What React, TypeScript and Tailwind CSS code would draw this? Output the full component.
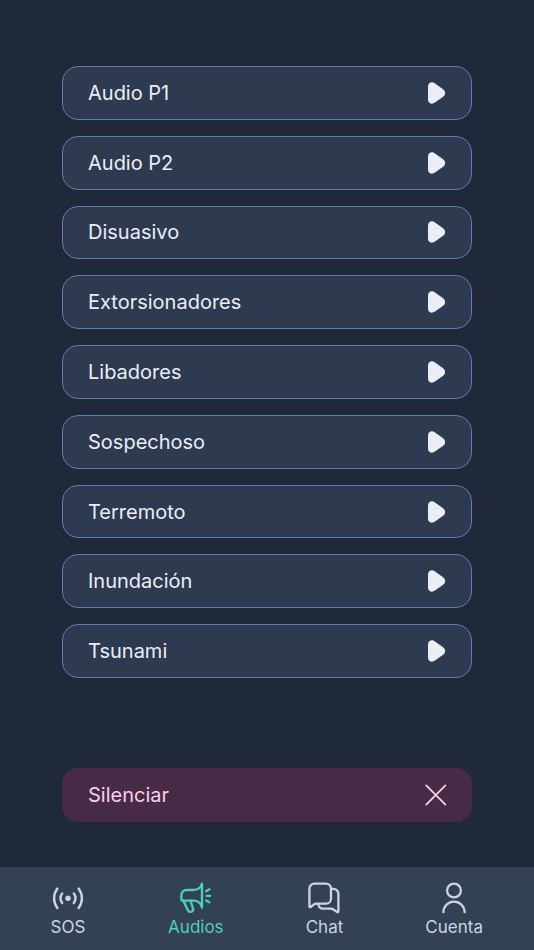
import React, { useState } from 'react';

const AUDIOS = [
  'Audio P1',
  'Audio P2',
  'Disuasivo',
  'Extorsionadores',
  'Libadores',
  'Sospechoso',
  'Terremoto',
  'Inundación',
  'Tsunami',
];

const PlayIcon: React.FC = () => (
  <svg className="h-6 w-6" viewBox="0 0 24 24" fill="currentColor" aria-hidden="true">
    <path d="M4 5.800C4 1.600 7.800 .200 11 2.400L18.800 8C21.800 10.200 21.800 13.800 18.800 16L11 21.600C7.800 23.800 4 22.400 4 18.200Z" />
  </svg>
);

const CloseIcon: React.FC = () => (
  <svg className="h-6 w-6" viewBox="0 0 24 24" fill="none" stroke="currentColor" strokeWidth={1.8} strokeLinecap="round" aria-hidden="true">
    <path d="M2.2 2.4l19.2 19.2M21.4 2.4l-19.2 19.2" />
  </svg>
);

const SosIcon: React.FC = () => (
  <svg className="h-9 w-9" viewBox="0 0 36 36" fill="none" stroke="currentColor" strokeWidth={2.4} strokeLinecap="round" aria-hidden="true">
    <circle cx="18" cy="18.2" r="2.7" fill="currentColor" stroke="none" />
    <path d="M12.2 13.4a8.2 8.2 0 0 0 0 9.6M23.8 13.4a8.2 8.2 0 0 1 0 9.6M7.4 8.4a16.2 16.2 0 0 0 0 19.6M28.6 8.4a16.2 16.2 0 0 1 0 19.6" />
  </svg>
);

const MegaphoneIcon: React.FC = () => (
  <svg className="h-9 w-9" viewBox="0 0 36 36" fill="none" stroke="currentColor" strokeWidth={2.3} strokeLinecap="round" strokeLinejoin="round" aria-hidden="true">
    <path d="M24 3.8v23.6" />
    <path d="M24 3.8c-1.2 4.2-4 6.2-8.5 6.2H8.4a5 5 0 0 0-5 5v4.2a1.5 1.500 0 0 0 1.5 1.5H15.5c4.5 0 7.3 2.2 8.5 6.7" />
    <path d="M5.4 20.7l4.4 9.3c1.6 3.4 6.1 1.8 5.2-1.5l-2.4-7.8" />
    <path d="M28.2 11.2l3.2-1.9M28.6 15.8h3.6M28.2 20.4l3.2 1.9" />
  </svg>
);

const ChatIcon: React.FC = () => (
  <svg className="h-9 w-9" viewBox="0 0 36 36" fill="none" stroke="currentColor" strokeWidth={2.3} strokeLinecap="round" strokeLinejoin="round" aria-hidden="true">
    <path d="M3.4 26.4V8.7a5 5 0 0 1 5-5h11.6a5 5 0 0 1 5 5v10a5 5 0 0 1-5 5H10.8a6 6 0 0 0-3.4 1.1L4.6 27c-.6.4-1.2.2-1.2-.6Z" />
    <path d="M25.4 8.9h2a5 5 0 0 1 5 5v17.6c0 .8-.6 1-1.2.6l-3.4-2.4a6 6 0 0 0-3.4-1H17a5 5 0 0 1-4.8-4.6" />
  </svg>
);

const UserIcon: React.FC = () => (
  <svg className="h-9 w-9" viewBox="0 0 36 36" fill="none" stroke="currentColor" strokeWidth={2.3} strokeLinecap="round" aria-hidden="true">
    <circle cx="18" cy="10.5" r="6.9" />
    <path d="M7.4 32.2a10.6 10.6 0 0 1 21.2 0" />
  </svg>
);

const TABS = [
  { label: 'SOS', Icon: SosIcon },
  { label: 'Audios', Icon: MegaphoneIcon },
  { label: 'Chat', Icon: ChatIcon },
  { label: 'Cuenta', Icon: UserIcon },
];

const App: React.FC = () => {
  const [active, setActive] = useState('Audios');

  return (
    <div className="flex min-h-screen flex-col bg-[#1f293a] font-['Inter',sans-serif]">
      <main className="flex flex-1 flex-col px-[62px] pt-[66px] pb-[45px]">
        <ul className="grid flex-1 auto-rows-fr gap-4">
          {AUDIOS.map((name) => (
            <li key={name} className="flex">
              <button type="button" className="flex w-full items-center justify-between rounded-2xl border border-[#617bb0] bg-[#2d3a50] pl-[25px] pr-[23px] text-xl text-[#ebeef6]">
                {name}
                <PlayIcon />
              </button>
            </li>
          ))}
        </ul>
        <button type="button" className="mt-[90px] flex h-[54px] items-center justify-between rounded-2xl bg-[#472a45] pl-[26px] pr-6 text-xl text-[#fbcfe8]">
          Silenciar
          <CloseIcon />
        </button>
      </main>
      <nav className="flex h-[83px] justify-between bg-[#334155] pt-[13px] pr-[51px] pl-[50px] text-[17px] leading-[22px]">
        {TABS.map(({ label, Icon }) => (
          <a
            key={label}
            href={`#${label.toLowerCase()}`}
            onClick={() => setActive(label)}
            className={`flex flex-col items-center ${active === label ? 'text-[#4bd0bb]' : 'text-[#cbd5e1]'}`}
          >
            <Icon />
            {label}
          </a>
        ))}
      </nav>
    </div>
  );
};

export default App;
